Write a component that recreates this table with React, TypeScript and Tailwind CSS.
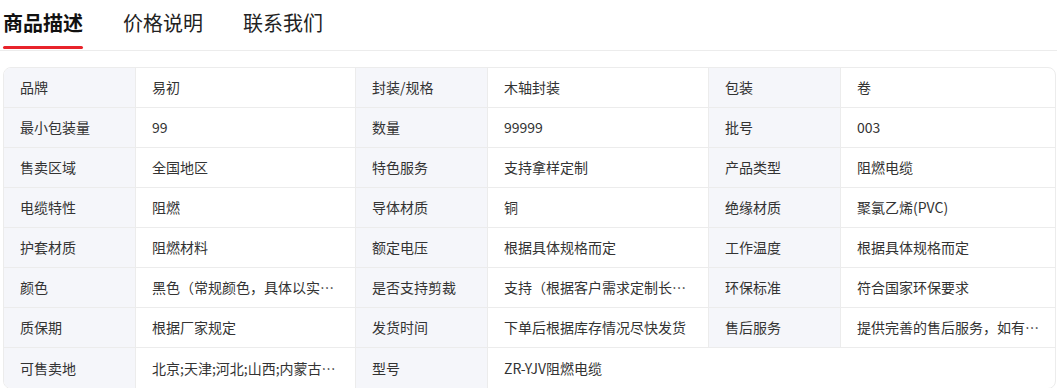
import React from 'react';

const rows: [string, string][][] = [
  [["品牌", "易初"], ["封装/规格", "木轴封装"], ["包装", "卷"]],
  [["最小包装量", "99"], ["数量", "99999"], ["批号", "003"]],
  [["售卖区域", "全国地区"], ["特色服务", "支持拿样定制"], ["产品类型", "阻燃电缆"]],
  [["电缆特性", "阻燃"], ["导体材质", "铜"], ["绝缘材质", "聚氯乙烯(PVC)"]],
  [["护套材质", "阻燃材料"], ["额定电压", "根据具体规格而定"], ["工作温度", "根据具体规格而定"]],
  [["颜色", "黑色（常规颜色，具体以实物为准）"], ["是否支持剪裁", "支持（根据客户需求定制长度）"], ["环保标准", "符合国家环保要求"]],
  [["质保期", "根据厂家规定"], ["发货时间", "下单后根据库存情况尽快发货"], ["售后服务", "提供完善的售后服务，如有问题请及时联系"]],
];

const App: React.FC = () => {
  const tabs = ["商品描述", "价格说明", "联系我们"];

  return (
    <div className="w-[1057px] h-[388px] bg-white overflow-hidden font-['Noto_Sans_CJK_SC','Noto_Sans',sans-serif] text-[#333]">
      {/* Tabs */}
      <div className="flex gap-10 pl-[3px] h-[51px] border-b border-[#ececec]">
        {tabs.map((tab, i) => (
          <div
            key={tab}
            className={
              i === 0
                ? "relative text-[20px] leading-[46px] font-bold text-[#111]"
                : "text-[20px] leading-[46px] text-[#222]"
            }
          >
            {tab}
            {i === 0 && <div className="absolute left-0 right-0 top-[46px] h-[3px] rounded-full bg-[#e8232b]" />}
          </div>
        ))}
      </div>

      {/* Spec table */}
      <div className="mt-[16px] ml-[3px] w-[1053px] border border-[#ececec] rounded-lg overflow-hidden text-[14px]">
        {rows.map((row, r) => (
          <div key={r} className="grid grid-cols-[132px_220px_132px_221px_132px_1fr] h-10 border-b border-[#ececec]">
            {row.map(([label, value], c) => (
              <React.Fragment key={c}>
                <div className="bg-[#f5f6fa] px-4 flex items-center border-r border-[#ececec] truncate">{label}</div>
                <div className={"px-4 flex items-center min-w-0 " + (c < 2 ? "border-r border-[#ececec]" : "")}>
                  <span className="truncate">{value}</span>
                </div>
              </React.Fragment>
            ))}
          </div>
        ))}
        <div className="grid grid-cols-[132px_220px_132px_1fr] h-10">
          <div className="bg-[#f5f6fa] px-4 flex items-center border-r border-[#ececec]">可售卖地</div>
          <div className="px-4 flex items-center min-w-0 border-r border-[#ececec]">
            <span className="truncate">北京;天津;河北;山西;内蒙古;辽宁;吉林;黑龙江;上海</span>
          </div>
          <div className="bg-[#f5f6fa] px-4 flex items-center border-r border-[#ececec]">型号</div>
          <div className="px-4 flex items-center">ZR-YJV阻燃电缆</div>
        </div>
      </div>
    </div>
  );
};

export default App;
